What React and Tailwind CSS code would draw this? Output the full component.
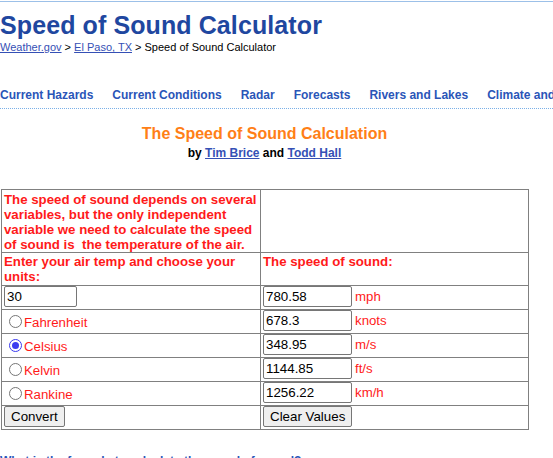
import React from 'react'

const navLinks = ['Current Hazards', 'Current Conditions', 'Radar', 'Forecasts', 'Rivers and Lakes', 'Climate and Past Weather']

const units = [
  { label: 'Fahrenheit', value: '678.3', unit: 'knots' },
  { label: 'Celsius', value: '348.95', unit: 'm/s', checked: true },
  { label: 'Kelvin', value: '1144.85', unit: 'ft/s' },
  { label: 'Rankine', value: '1256.22', unit: 'km/h' },
]

const cell = 'border border-[#808080] pl-[2px] pr-0 align-top'
const input =
  'h-[21px] border border-[#767676] rounded-[2px] px-[2px] text-[13.33px] text-black bg-white outline-none'
const button =
  'h-[21px] px-[6px] border border-[#767676] rounded-[2px] bg-[#efefef] text-[13.33px] text-black leading-none'

function Radio({ checked }) {
  return (
    <span
      className={
        'inline-block w-[13px] h-[13px] rounded-full border mr-[2px] align-[-1px] ' +
        (checked ? 'border-[#3b3bf0] bg-white p-[2px]' : 'border-[#767676] bg-white')
      }
    >
      {checked && <span className="block w-full h-full rounded-full bg-[#3b3bf0]" />}
    </span>
  )
}

export default function App() {
  return (
    <div className="font-['Liberation_Sans',Arial,sans-serif] bg-white w-[553px] h-[458px] overflow-hidden border-t border-[#9cc0e8] mt-[1px]">
      <h1 className="text-[25px] font-bold text-[#1f47a0] leading-none pt-[11px] tracking-[0.1px]">Speed of Sound Calculator</h1>
      <div className="text-[11px] text-black mt-[3px] leading-[13px]">
        <a className="text-[#3550b5] underline">Weather.gov</a> &gt; <a className="text-[#3550b5] underline">El Paso, TX</a> &gt; Speed of Sound Calculator
      </div>

      <div className="mt-[34px] border-b border-dotted border-[#7ab0e8] pb-[6px] whitespace-nowrap flex gap-[19px] text-[12px] font-bold text-[#2a55b8] leading-[14px]">
        {navLinks.map((l) => (
          <span key={l}>{l}</span>
        ))}
      </div>

      <div className="w-[529px] text-center mt-[16px]">
        <div className="text-[16px] font-bold text-[#ff7f17] leading-[18px]">The Speed of Sound Calculation</div>
        <div className="text-[12px] font-bold text-black mt-[3px] leading-[14px]">
          by <a className="text-[#3550b5] underline">Tim Brice</a> and <a className="text-[#3550b5] underline">Todd Hall</a>
        </div>
      </div>

      <table className="mt-[29px] ml-[1px] w-[528px] border-collapse border border-[#222] text-[13.25px] table-fixed">
        <tbody>
          <tr className="h-[63px]">
            <td className={cell + ' w-[259px] font-bold text-[#ff1a1a] leading-[15px] pt-[2px]'}>
              The speed of sound depends on several variables, but the only independent variable we need to calculate
              the speed of sound is&nbsp; the temperature of the air.
            </td>
            <td className={cell}></td>
          </tr>
          <tr className="h-[33px]">
            <td className={cell + ' font-bold text-[#ff1a1a] leading-[15px] pt-[1px]'}>
              Enter your air temp and choose your units:
            </td>
            <td className={cell + ' font-bold text-[#ff1a1a] leading-[15px] pt-[1px]'}>The speed of sound:</td>
          </tr>
          <tr className="h-[24px]">
            <td className={cell + ' align-middle'}>
              <input className={input + ' w-[73px]'} defaultValue="30" />
            </td>
            <td className={cell + ' align-middle text-[#ff1a1a]'}>
              <input className={input + ' w-[89px] mr-[3px]'} defaultValue="780.58" />
              mph
            </td>
          </tr>
          {units.map((u) => (
            <tr key={u.label} className="h-[24px]">
              <td className={cell + ' align-middle text-[#ff1a1a] pl-[7px] pt-[3px]'}>
                <Radio checked={u.checked} />
                {u.label}
              </td>
              <td className={cell + ' align-middle text-[#ff1a1a]'}>
                <input className={input + ' w-[89px] mr-[3px]'} defaultValue={u.value} />
                {u.unit}
              </td>
            </tr>
          ))}
          <tr className="h-[24px]">
            <td className={cell + ' align-middle'}>
              <button className={button}>Convert</button>
            </td>
            <td className={cell + ' align-middle'}>
              <button className={button}>Clear Values</button>
            </td>
          </tr>
        </tbody>
      </table>

      <div className="mt-[24px] text-[12px] font-bold text-[#2a55b8] leading-[14px]">
        What is the formula to calculate the speed of sound?
      </div>
    </div>
  )
}
